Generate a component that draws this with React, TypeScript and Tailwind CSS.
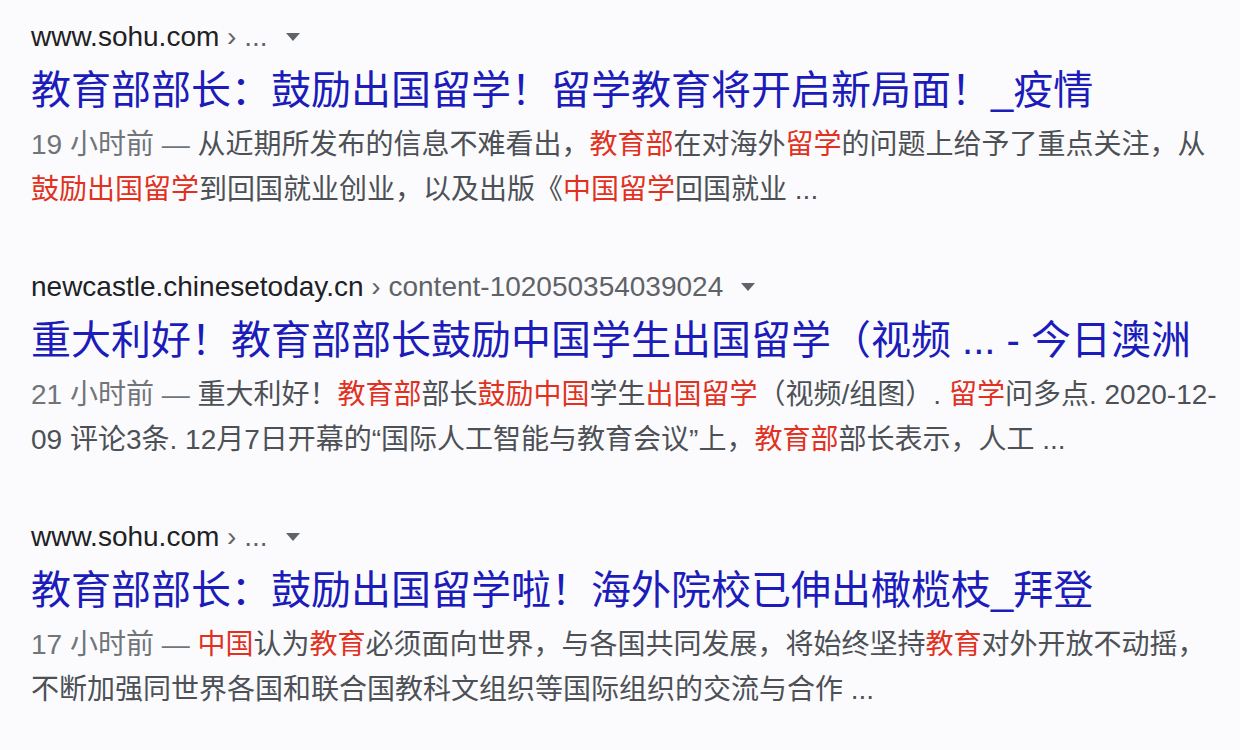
import React from 'react';

const font = "font-['Liberation_Sans','Noto_Sans_CJK_SC',sans-serif]";

function Em({ children }: { children: React.ReactNode }) {
  return <span className="text-[#e0321f]">{children}</span>;
}

function Caret() {
  return (
    <svg width="14" height="8" viewBox="0 0 14 8" className="ml-[18px] shrink-0">
      <path d="M0 0h14L7 8z" fill="#606368" />
    </svg>
  );
}

interface ResultProps {
  domain: string;
  path: string;
  title: string;
  age: string;
  lines: React.ReactNode[];
}

function Result({ domain, path, title, age, lines }: ResultProps) {
  return (
    <div className="mb-[55px]">
      <div className="flex items-center h-[40px] text-[28px] leading-[40px] whitespace-nowrap">
        <span className="text-[#202124]">{domain}</span>
        <span className="text-[#5f6368]">&nbsp;›&nbsp;{path}</span>
        <Caret />
      </div>
      <h3 className="mt-[5px] text-[40px] leading-[56px] text-[#1c1cbb] font-normal whitespace-nowrap">
        {title}
      </h3>
      <div className="mt-[4px] text-[28px] leading-[45px] text-[#4d5156] whitespace-nowrap">
        {lines.map((line, i) => (
          <div key={i}>
            {i === 0 && <span className="text-[#70757a]">{age} — </span>}
            {line}
          </div>
        ))}
      </div>
    </div>
  );
}

export default function App() {
  return (
    <div className={`${font} min-h-screen w-full bg-[#fbfbfd] pl-[31px] pt-[17px] overflow-hidden`}>
      <Result
        domain="www.sohu.com"
        path="..."
        title="教育部部长：鼓励出国留学！留学教育将开启新局面！_疫情"
        age="19 小时前"
        lines={[
          <>
            从近期所发布的信息不难看出，<Em>教育部</Em>在对海外<Em>留学</Em>的问题上给予了重点关注，从
          </>,
          <>
            <Em>鼓励出国留学</Em>到回国就业创业，以及出版《<Em>中国留学</Em>回国就业 ...
          </>,
        ]}
      />
      <Result
        domain="newcastle.chinesetoday.cn"
        path="content-102050354039024"
        title="重大利好！教育部部长鼓励中国学生出国留学（视频 ... - 今日澳洲"
        age="21 小时前"
        lines={[
          <>
            重大利好！<Em>教育部</Em>部长<Em>鼓励中国</Em>学生<Em>出国留学</Em>（视频/组图）. <Em>留学</Em>问多点. 2020-12-
          </>,
          <>
            09 评论3条. 12月7日开幕的“国际人工智能与教育会议”上，<Em>教育部</Em>部长表示，人工 ...
          </>,
        ]}
      />
      <Result
        domain="www.sohu.com"
        path="..."
        title="教育部部长：鼓励出国留学啦！海外院校已伸出橄榄枝_拜登"
        age="17 小时前"
        lines={[
          <>
            <Em>中国</Em>认为<Em>教育</Em>必须面向世界，与各国共同发展，将始终坚持<Em>教育</Em>对外开放不动摇，
          </>,
          <>不断加强同世界各国和联合国教科文组织等国际组织的交流与合作 ...</>,
        ]}
      />
    </div>
  );
}
